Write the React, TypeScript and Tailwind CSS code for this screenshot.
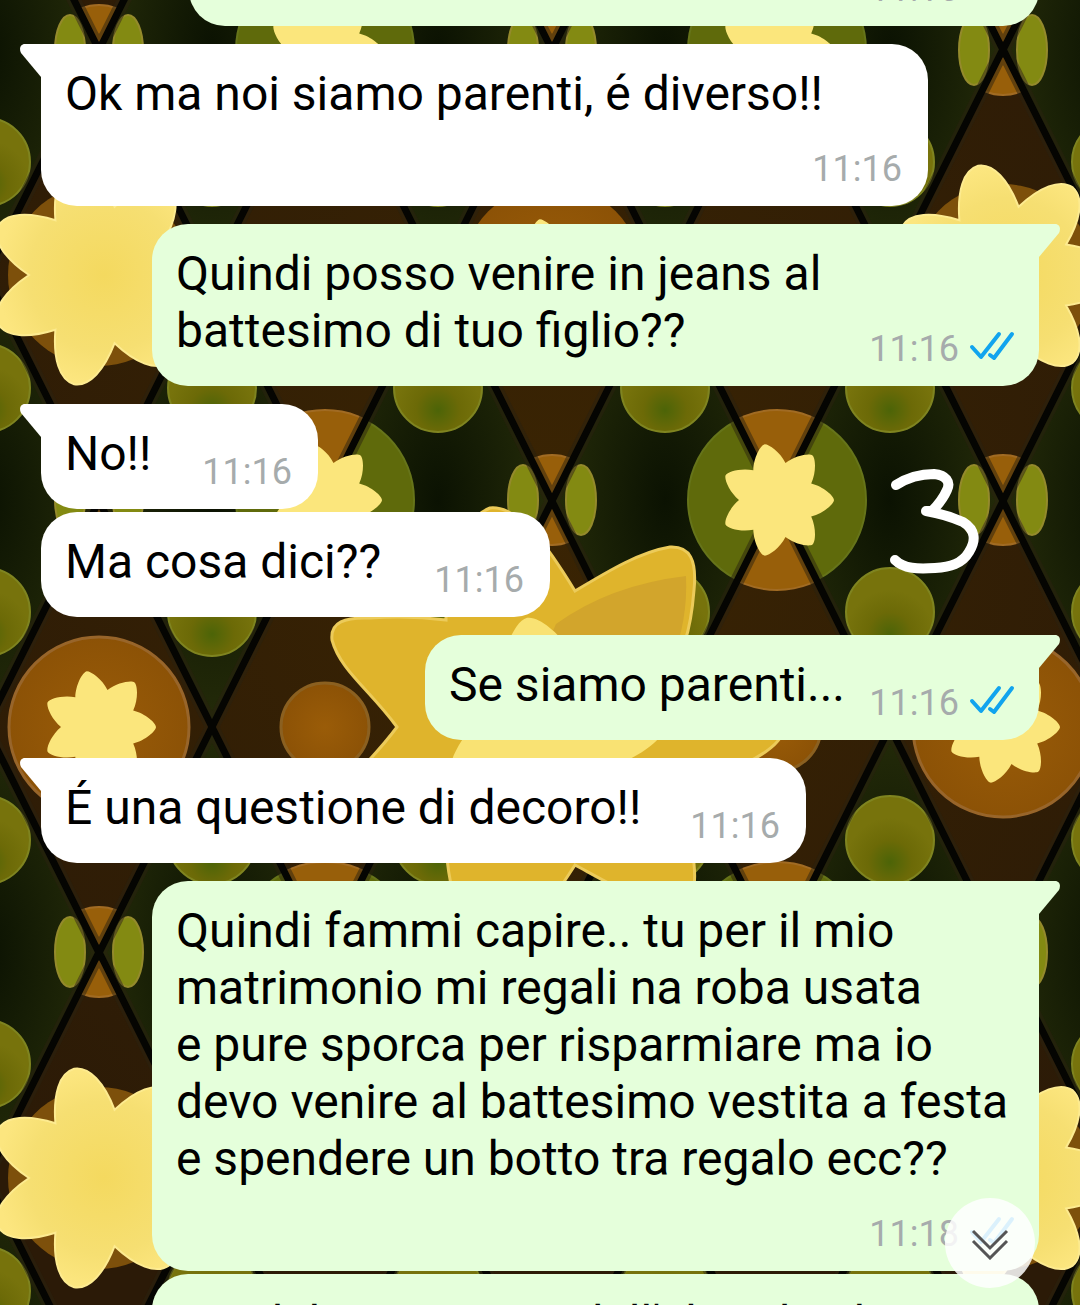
import { useId } from "react";
import type { ReactNode } from "react";

type Message = {
  id: number;
  from: "me" | "other";
  text: ReactNode;
  time: string;
  tail?: boolean;
  className: string;
};

const messages: Message[] = [
  { id: 1, from: "me", text: "", time: "11:16", className: "w-[850px]" },
  { id: 2, from: "other", text: "Ok ma noi siamo parenti, é diverso!!", time: "11:16", tail: true, className: "w-[887px] pb-[84px]" },
  { id: 3, from: "me", text: "Quindi posso venire in jeans al battesimo di tuo figlio??", time: "11:16", tail: true, className: "w-[887px] pr-[200px] pb-[27px]" },
  { id: 4, from: "other", text: "No!!", time: "11:16", tail: true, className: "w-[277px] pb-[27px]" },
  { id: 5, from: "other", text: "Ma cosa dici??", time: "11:16", className: "w-[509px] pb-[27px]" },
  { id: 6, from: "me", text: "Se siamo parenti...", time: "11:16", tail: true, className: "w-[614px] pb-[27px]" },
  { id: 7, from: "other", text: "É una questione di decoro!!", time: "11:16", tail: true, className: "w-[765px] pb-[27px]" },
  {
    id: 8,
    from: "me",
    text: (
      <>
        Quindi fammi capire.. tu per il mio
        <br />
        matrimonio mi regali na roba usata
        <br />
        e pure sporca per risparmiare ma io
        <br />
        devo venire al battesimo vestita a festa
        <br />
        e spendere un botto tra regalo ecc??
      </>
    ),
    time: "11:18",
    tail: true,
    className: "w-[887px] pb-[84px]",
  },
  { id: 9, from: "me", text: "Ma del vero senso dell'abito la classe", time: "11:18", className: "w-[887px] pb-[84px]" },
];

function polar(cx: number, cy: number, r: number, deg: number) {
  const a = (deg * Math.PI) / 180;
  return `${(cx + r * Math.cos(a)).toFixed(1)} ${(cy + r * Math.sin(a)).toFixed(1)}`;
}

// seven petals, the first one points right; round sets how blunt the tips are
function flower(cx: number, cy: number, r: number, inner: number, round: number) {
  const step = 360 / 7;
  let d = `M${polar(cx, cy, inner, -step / 2)}`;
  for (let i = 0; i < 7; i++) {
    const a = i * step;
    d += ` C${polar(cx, cy, r * 0.85, a - 16)} ${polar(cx, cy, r, a - round)} ${polar(cx, cy, r, a)}`;
    d += ` C${polar(cx, cy, r, a + round)} ${polar(cx, cy, r * 0.85, a + 16)} ${polar(cx, cy, inner, a + step / 2)}`;
  }
  return d + "Z";
}

const cols = [-127, 99, 325, 552, 777, 1003, 1229];
const rows = [50, 500, 952, 1403];
const middleRows = [-176, 275, 727, 1178];

function Wallpaper() {
  const id = useId();
  const green = `${id}green`;
  const brown = `${id}brown`;
  const olive = `${id}olive`;
  const amber = `${id}amber`;
  const gold = `${id}gold`;
  const clip = `${id}clip`;
  const diamonds = middleRows.flatMap((y) => cols.map((x) => `M${x} ${y - 226}l113 226l-113 226l-113 -226Z`)).join("");
  return (
    <svg
      aria-hidden="true"
      viewBox="0 0 1080 1305"
      preserveAspectRatio="xMidYMid slice"
      className="absolute inset-0 h-full w-full"
    >
      <defs>
        <radialGradient id={green}>
          <stop offset="0" stopColor="#0b1202" />
          <stop offset="1" stopColor="#242b09" />
        </radialGradient>
        <radialGradient id={brown}>
          <stop offset="0" stopColor="#3a2403" />
          <stop offset="1" stopColor="#2b1a07" />
        </radialGradient>
        <radialGradient id={olive} cy="0.75">
          <stop offset="0" stopColor="#4c6407" />
          <stop offset="0.5" stopColor="#6c6a07" />
          <stop offset="1" stopColor="#77730c" />
        </radialGradient>
        <radialGradient id={amber}>
          <stop offset="0" stopColor="#9a5c08" />
          <stop offset="1" stopColor="#8c5206" />
        </radialGradient>
        <radialGradient id={gold}>
          <stop offset="0" stopColor="#f4d95f" />
          <stop offset="0.7" stopColor="#f6df72" />
          <stop offset="1" stopColor="#fce67f" />
        </radialGradient>
        <clipPath id={clip}>
          <path d={diamonds} />
        </clipPath>
      </defs>
      <rect width="1080" height="1305" fill="#1b2206" />
      {rows.flatMap((y) =>
        cols.map((x) => (
          <g key={`${x}-${y}`}>
            <path d={`M${x + 113} ${y - 226}l113 226l-113 226l-113 -226Z`} fill={`url(#${green})`} />
            <circle cx={x + 113} cy={y - 112} r="44" fill={`url(#${olive})`} stroke="#7f8420" strokeWidth="2" />
            <circle cx={x + 113} cy={y + 112} r="44" fill={`url(#${olive})`} stroke="#7f8420" strokeWidth="2" />
          </g>
        )),
      )}
      {rows.flatMap((y) =>
        cols.map((x, i) =>
          i % 2 === 0 ? (
            <circle key={`${x}-${y}`} cx={x} cy={y} r="89" fill="#5f6a0b" stroke="#66741a" strokeWidth="2" />
          ) : (
            <g key={`${x}-${y}`} fill="#838a12" stroke="#948a2c" strokeWidth="2">
              <ellipse cx={x - 29} cy={y} rx="15" ry="35" />
              <ellipse cx={x + 29} cy={y} rx="15" ry="35" />
            </g>
          ),
        ),
      )}
      <path d={diamonds} fill={`url(#${brown})`} />
      <g clipPath={`url(#${clip})`}>
        {rows.flatMap((y) =>
          cols.map((x, i) => (
            <circle key={`${x}-${y}`} cx={x} cy={y} r={i % 2 === 0 ? 90 : 45} fill="#985f0a" stroke="#a16b23" strokeWidth="2" />
          )),
        )}
      </g>
      <path d={diamonds} fill="none" stroke="#29210f" strokeWidth="14" opacity="0.5" />
      <path d={diamonds} fill="none" stroke="#050502" strokeWidth="7" />
      {rows.flatMap((y) =>
        [325, 777].map((x) => <path key={`${x}-${y}`} d={flower(x, y, 57, 38, 4)} fill="#fbe67c" />),
      )}
      {[275, 1178].map((y) => (
        <g key={y}>
          {[99, 1003].map((x) => (
            <g key={x}>
              <circle cx={x} cy={y} r="91" fill="#7d500b" />
              <path d={flower(x, y, 112, 70, 8)} fill={`url(#${gold})`} stroke="#fdeb90" strokeWidth="2" />
            </g>
          ))}
          <circle cx="552" cy={y} r="90" fill={`url(#${amber})`} />
          <path d={flower(552, y, 57, 38, 4)} fill="#fbe67c" />
        </g>
      ))}
      {[99, 1003].map((x) => (
        <g key={x}>
          <circle cx={x} cy="727" r="90" fill={`url(#${amber})`} stroke="#98652a" strokeWidth="3" />
          <path d={flower(x, 727, 57, 38, 4)} fill="#fbe67c" />
        </g>
      ))}
      {[325, 777].map((x) => (
        <circle key={x} cx={x} cy="727" r="44" fill={`url(#${amber})`} stroke="#8b6020" strokeWidth="3" />
      ))}
      {/* big flower, its petals are wider than those of the small ones */}
      <path
        d="M397 727C370 690 340 670 332 640C330 622 345 617 370 618C400 616 430 618 446 620C446 570 460 520 490 508C520 505 550 550 575 591C610 570 640 552 670 547C690 546 697 560 694 590C690 640 680 655 671 670C720 675 780 700 785 727C780 754 720 779 671 784C680 799 690 814 694 864C697 894 690 908 670 907C640 902 610 884 575 865C550 904 520 949 490 946C460 934 446 884 446 834C430 836 400 838 370 836C345 837 330 832 332 814C340 784 370 764 397 727Z"
        fill="#dfb42c"
        stroke="#eccb5a"
        strokeWidth="3"
      />
      <path d="M556 624Q610 585 686 576Q688 620 672 660H540Z" fill="#d2a52c" />
      <path d={flower(552, 727, 112, 80, 6)} fill="#f9e273" />
      {/* handwritten number */}
      <path
        d="M896 485C910 476 922 474 934 474C946 475 951 482 947 490C943 499 936 507 932 511H926C938 513 952 517 963 522C976 530 976 541 969 552C962 564 950 567 935 568C918 569 904 569 895 560"
        fill="none"
        stroke="#fff"
        strokeWidth="10"
        strokeLinecap="round"
        strokeLinejoin="round"
      />
    </svg>
  );
}

function Tail({ side }: { side: "left" | "right" }) {
  return (
    <svg
      aria-hidden="true"
      viewBox="0 0 22 34"
      className={`absolute top-0 h-[34px] w-[22px] ${
        side === "left" ? "-left-[21px] text-white" : "-right-[21px] -scale-x-100 text-[#e5ffdb]"
      }`}
    >
      <path d="M22 0H5C0 0-1 5 1 9L21 33H22Z" fill="currentColor" />
    </svg>
  );
}

function ReadTicks() {
  return (
    <svg role="img" aria-label="Letto" viewBox="0 0 46 30" className="mb-[6px] h-[30px] w-[46px]">
      <path
        d="M3 16L12 26L30 3M21 24L25 27L43 3"
        fill="none"
        stroke="#11a4ee"
        strokeWidth="4"
        strokeLinecap="round"
        strokeLinejoin="round"
      />
    </svg>
  );
}

function Bubble({ message }: { message: Message }) {
  const mine = message.from === "me";
  const corner = message.tail ? (mine ? "rounded-tr-none" : "rounded-tl-none") : "";
  return (
    <div
      className={`relative min-h-[105px] max-w-full rounded-[36px] px-6 pt-[21px] ${
        mine ? "self-end bg-[#e5ffdb]" : "self-start bg-white"
      } ${corner} ${message.className}`}
    >
      {message.tail && <Tail side={mine ? "right" : "left"} />}
      <p className="text-[48px] leading-[57px] text-black">{message.text}</p>
      <div className={`absolute bottom-4 flex items-center gap-[10px] ${mine ? "right-6" : "right-[26px]"}`}>
        <time className="text-[36px] leading-[42px] text-[#a6abac]">{message.time}</time>
        {mine && <ReadTicks />}
      </div>
    </div>
  );
}

export default function App() {
  return (
    <main className="relative h-screen overflow-hidden bg-[#1b2206] font-['Roboto',sans-serif]">
      <Wallpaper />
      <ol className="relative -mt-[79px] flex flex-col px-[41px]">
        {messages.map((message, i) => (
          <li key={message.id} className={`flex flex-col ${i === 0 ? "" : message.tail ? "mt-[18px]" : "mt-[3px]"}`}>
            <Bubble message={message} />
          </li>
        ))}
      </ol>
      <button
        type="button"
        aria-label="Vai in fondo"
        className="absolute right-[45px] bottom-[17px] flex size-[90px] items-center justify-center rounded-full bg-white/85"
      >
        <svg aria-hidden="true" viewBox="0 0 40 34" className="h-[34px] w-10">
          <path d="M3 5L20 22L37 5M3 15L20 32L37 15" fill="none" stroke="#555" strokeWidth="3" />
        </svg>
      </button>
    </main>
  );
}
